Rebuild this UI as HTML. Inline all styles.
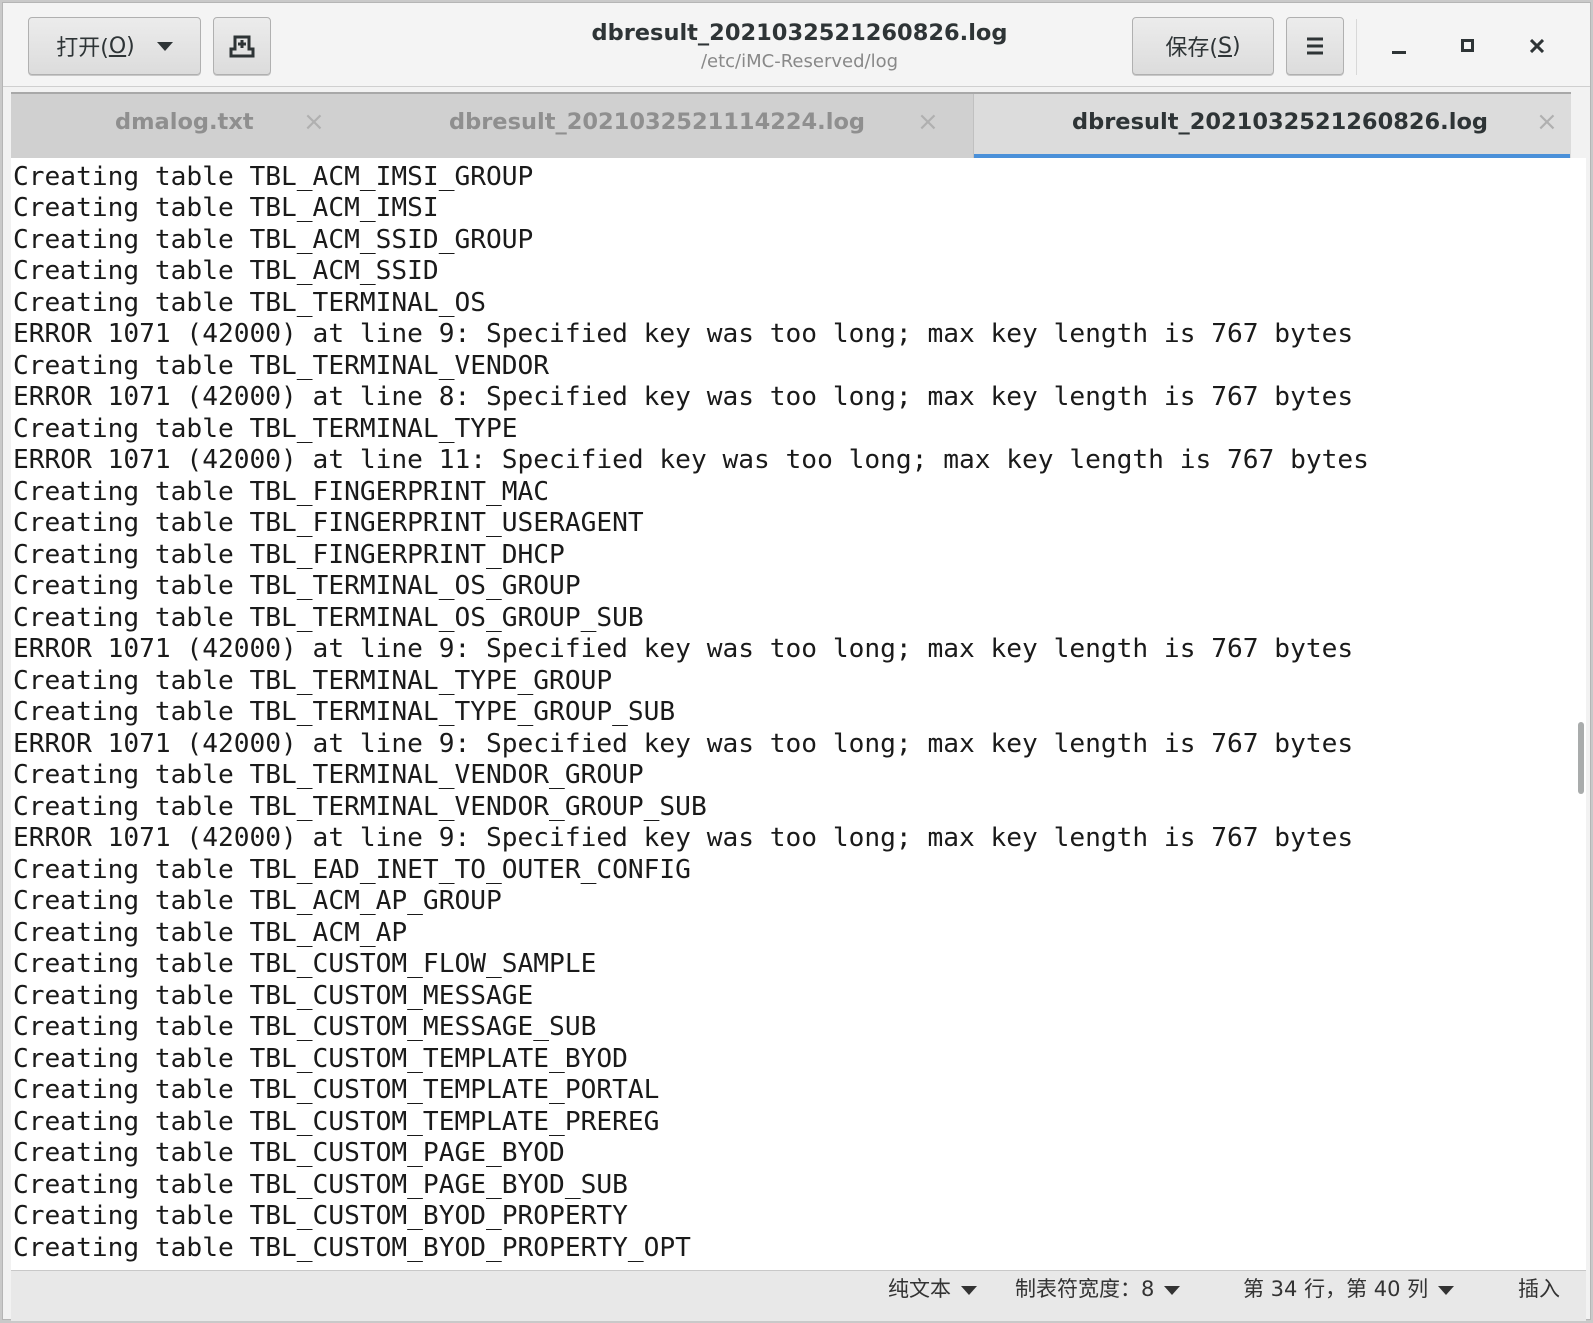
<!DOCTYPE html>
<html><head><meta charset="utf-8">
<style>
*{margin:0;padding:0;box-sizing:border-box}
html,body{width:1593px;height:1323px;overflow:hidden;background:#c9c9c9}
body{position:relative;font-family:"DejaVu Sans","Noto Sans CJK SC",sans-serif}
.win{position:absolute;left:2px;top:2px;width:1589px;height:1318px;background:#f2f2f2;border:1px solid #b5b5b5}
.hdr{position:absolute;left:0;top:0;width:1587px;height:84px;background:#f4f4f4;border-bottom:1px solid #cfcfcf}
.btn{position:absolute;border:1px solid #b0b0b0;border-radius:4px;background:linear-gradient(#ececec,#dcdcdc);color:#2e3436;font-size:22px;display:flex;align-items:center;justify-content:center;box-shadow:0 1px 0 #c8c8c8}
.title{position:absolute;left:0;width:1593px;text-align:center;color:#2e3436}
.tabs{position:absolute;left:8px;top:89px;width:1560px;height:66px;background:#d0d0d0;border-top:2px solid #a8a8a8}
.tab{position:absolute;top:0;height:64px;font-size:22.5px;font-weight:bold;color:#8f8f8f}
.tab .t{position:absolute;top:15px;white-space:nowrap}
.x{position:absolute;font-size:26px;color:#b0b0b0;font-weight:normal;top:13px}
.text{position:absolute;left:8px;top:155px;width:1575px;height:1112px;background:#fff;overflow:hidden}
pre{position:absolute;left:2px;top:-28px;font-family:"DejaVu Sans Mono","Liberation Mono",monospace;font-size:26.2px;line-height:31.5px;color:#1a1a1a}
.status{position:absolute;left:8px;top:1267px;width:1575px;height:51px;background:#e8e8e8;border-top:1px solid #c8c8c8;font-size:21px;color:#333}
.status span{position:absolute;top:2px;white-space:nowrap}
.tri{display:inline-block;width:0;height:0;border-left:8px solid transparent;border-right:8px solid transparent;border-top:9px solid #333;vertical-align:middle;margin-left:10px}
</style></head><body>
<div class="win">
 <div class="hdr">
  <div class="btn" style="left:25px;top:14px;width:173px;height:58px">打开(<u>O</u>)<span class="tri" style="margin-left:22px;border-top-color:#2e3436"></span></div>
  <div class="btn" style="left:210px;top:14px;width:58px;height:58px">
   <svg width="28" height="26" viewBox="0 0 28 26"><path d="M7 4h14v12h4v7H3v-7h4z" fill="none" stroke="#2e3436" stroke-width="3"/><path d="M14 7v8M10 11h8" stroke="#2e3436" stroke-width="3"/></svg>
  </div>
  <div class="title" style="top:17px;font-size:22.5px;font-weight:bold">dbresult_2021032521260826.log</div>
  <div class="title" style="top:48px;font-size:18px;color:#888">/etc/iMC-Reserved/log</div>
  <div class="btn" style="left:1129px;top:14px;width:142px;height:58px">保存(<u>S</u>)</div>
  <div class="btn" style="left:1283px;top:14px;width:58px;height:58px">
   <svg width="20" height="20"><path d="M2 3h16M2 10h16M2 17h16" stroke="#2e3436" stroke-width="3"/></svg>
  </div>
  <div style="position:absolute;left:1353px;top:16px;width:1px;height:56px;background:#d8d8d8"></div>
  <div style="position:absolute;left:1389px;top:48px;width:14px;height:3px;background:#2e3436"></div>
  <div style="position:absolute;left:1458px;top:36px;width:13px;height:13px;border:3px solid #2e3436"></div>
  <svg style="position:absolute;left:1527px;top:36px" width="14" height="14"><path d="M1 1L13 13M13 1L1 13" stroke="#2e3436" stroke-width="3"/></svg>
 </div>
 <div class="tabs">
  <div class="tab" style="left:0;width:372px"><span class="t" style="left:104px">dmalog.txt</span><span class="x" style="left:292px">×</span></div>
  <div class="tab" style="left:372px;width:590px"><span class="t" style="left:66px">dbresult_2021032521114224.log</span><span class="x" style="left:534px">×</span></div>
  <div class="tab" style="left:962px;width:598px;background:#dcdcdc;color:#2e3436;border-left:1px solid #c0c0c0"><span class="t" style="left:98px">dbresult_2021032521260826.log</span><span class="x" style="left:562px">×</span><div style="position:absolute;left:0;bottom:0;width:596px;height:4px;background:#4a90d9"></div></div>
 </div>
 <div class="text">
<pre>Creating table TBL_ACM_IMSI_GROUP_SUB
Creating table TBL_ACM_IMSI_GROUP
Creating table TBL_ACM_IMSI
Creating table TBL_ACM_SSID_GROUP
Creating table TBL_ACM_SSID
Creating table TBL_TERMINAL_OS
ERROR 1071 (42000) at line 9: Specified key was too long; max key length is 767 bytes
Creating table TBL_TERMINAL_VENDOR
ERROR 1071 (42000) at line 8: Specified key was too long; max key length is 767 bytes
Creating table TBL_TERMINAL_TYPE
ERROR 1071 (42000) at line 11: Specified key was too long; max key length is 767 bytes
Creating table TBL_FINGERPRINT_MAC
Creating table TBL_FINGERPRINT_USERAGENT
Creating table TBL_FINGERPRINT_DHCP
Creating table TBL_TERMINAL_OS_GROUP
Creating table TBL_TERMINAL_OS_GROUP_SUB
ERROR 1071 (42000) at line 9: Specified key was too long; max key length is 767 bytes
Creating table TBL_TERMINAL_TYPE_GROUP
Creating table TBL_TERMINAL_TYPE_GROUP_SUB
ERROR 1071 (42000) at line 9: Specified key was too long; max key length is 767 bytes
Creating table TBL_TERMINAL_VENDOR_GROUP
Creating table TBL_TERMINAL_VENDOR_GROUP_SUB
ERROR 1071 (42000) at line 9: Specified key was too long; max key length is 767 bytes
Creating table TBL_EAD_INET_TO_OUTER_CONFIG
Creating table TBL_ACM_AP_GROUP
Creating table TBL_ACM_AP
Creating table TBL_CUSTOM_FLOW_SAMPLE
Creating table TBL_CUSTOM_MESSAGE
Creating table TBL_CUSTOM_MESSAGE_SUB
Creating table TBL_CUSTOM_TEMPLATE_BYOD
Creating table TBL_CUSTOM_TEMPLATE_PORTAL
Creating table TBL_CUSTOM_TEMPLATE_PREREG
Creating table TBL_CUSTOM_PAGE_BYOD
Creating table TBL_CUSTOM_PAGE_BYOD_SUB
Creating table TBL_CUSTOM_BYOD_PROPERTY
Creating table TBL_CUSTOM_BYOD_PROPERTY_OPT</pre>
  <div style="position:absolute;left:0;top:0;width:1575px;height:4px;background:#fff"></div>
  <div style="position:absolute;left:1567px;top:564px;width:6px;height:72px;border-radius:3px;background:#a9acac"></div>
 </div>
 <div class="status">
  <span style="left:877px">纯文本<i class="tri"></i></span>
  <span style="left:1004px">制表符宽度：8<i class="tri"></i></span>
  <span style="left:1232px">第 34 行，第 40 列<i class="tri"></i></span>
  <span style="left:1507px">插入</span>
 </div>
</div>
</body></html>
